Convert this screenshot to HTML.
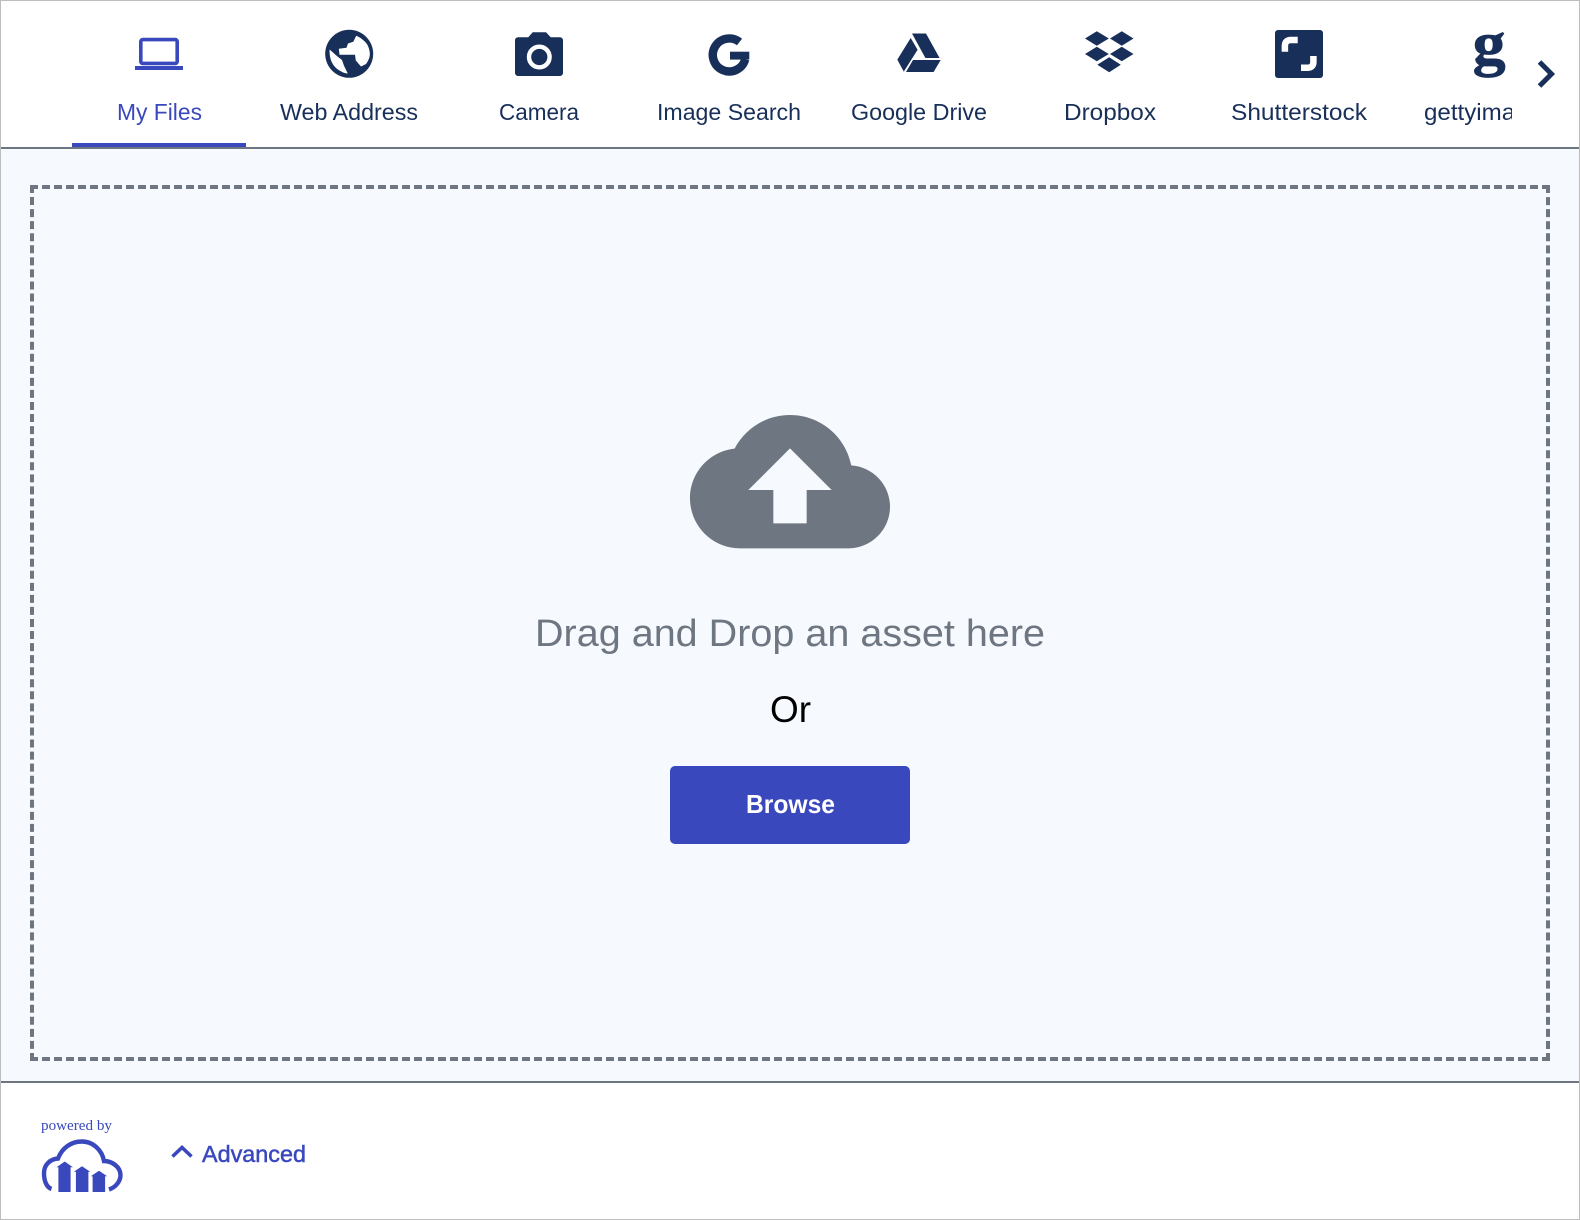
<!DOCTYPE html>
<html lang="en">
<head>
<meta charset="utf-8">
<title>Upload</title>
<style>
html,body{margin:0;padding:0;width:1580px;height:1220px;overflow:hidden;background:#fff}
#frame{position:absolute;left:0;top:0;width:1578px;height:1218px;border:1px solid #bdbdbd}
#main{position:absolute;left:1px;top:149px;width:1578px;height:932px;background:#f6faff}
.line{position:absolute;left:1px;width:1578px;height:2px;background:#6e7682}
#tabline{position:absolute;left:72px;top:143px;width:174px;height:4px;background:#3a48be}
svg{position:absolute;left:0;top:0}
text{font-family:"Liberation Sans",sans-serif}
.tab{font-size:23.5px;fill:#182f59}
</style>
</head>
<body>
<div id="main"></div>
<div class="line" style="top:147px"></div>
<div class="line" style="top:1081px"></div>
<div id="tabline"></div>
<div id="frame"></div>
<svg width="1580" height="1220" viewBox="0 0 1580 1220" xmlns="http://www.w3.org/2000/svg">
  <defs><clipPath id="c"><rect x="1400" y="90" width="112" height="45"/></clipPath></defs>

  <!-- dashed drop zone -->
  <g fill="none" stroke="#6e7682" stroke-width="4">
    <path stroke-dasharray="8 4" d="M30 187H1550"/>
    <path stroke-dasharray="8 4" d="M1550 1059H30"/>
    <path stroke-dasharray="8 4.055" d="M32 185V1061"/>
    <path stroke-dasharray="8 4.055" d="M1548 1061V185"/>
  </g>

  <!-- laptop -->
  <rect x="140.8" y="39.6" width="36.4" height="23.8" rx="2" fill="none" stroke="#3a48be" stroke-width="3.6"/>
  <rect x="135" y="66" width="48" height="4" fill="#3a48be"/>
  <text class="tab" x="117" y="120" textLength="85" lengthAdjust="spacingAndGlyphs" style="fill:#3a48be">My Files</text>

  <!-- globe -->
  <circle cx="349.2" cy="53.8" r="24" fill="#182f59"/>
  <path fill="#fff" d="M356.2 35.8L353.3 41.8 348 43.5 346.5 47.8 338.8 48.8 339.5 54.7 355 54.7 355.8 60.5 361 66.5 366 64C369 60 370 56.5 369.8 53 369.3 47.5 367 43.5 365 41.8 362 38.8 359 36.8 356.2 35.8Z"/>
  <path fill="#fff" d="M329.6 49.5L337.5 56.5 342 60 344 65.7 347.8 73.6C344 73.2 342 72 339.5 70.5 336 68.5 334 66 332.8 64 330 59.5 329.4 54 329.6 49.5Z"/>
  <text class="tab" x="280" y="120" textLength="138" lengthAdjust="spacingAndGlyphs">Web Address</text>

  <!-- camera -->
  <path fill="#182f59" d="M518 37.3H528.3L532.7 32.3H546L550.7 37.3H560A3 3 0 0 1 563 40.3V73A3 3 0 0 1 560 76H518A3 3 0 0 1 515 73V40.3A3 3 0 0 1 518 37.3Z"/>
  <circle cx="539.3" cy="57" r="10.3" fill="none" stroke="#fff" stroke-width="4.4"/>
  <text class="tab" x="499" y="120" textLength="80" lengthAdjust="spacingAndGlyphs">Camera</text>

  <!-- google G -->
  <path fill="none" stroke="#182f59" stroke-width="8.4" d="M739.5 42A16.5 16.5 0 1 0 745.2 59.3"/>
  <rect x="730" y="51.7" width="19.3" height="7.9" fill="#182f59"/>
  <text class="tab" x="657" y="120" textLength="144" lengthAdjust="spacingAndGlyphs">Image Search</text>

  <!-- drive -->
  <path fill="#182f59" d="M912 33.5H926L939.6 58H925.4Z"/>
  <path fill="#182f59" d="M910.7 38L917.6 49.8 903.8 71.6 897.3 59.6Z"/>
  <path fill="#182f59" d="M913 60H940.7L933.6 72H906Z"/>
  <text class="tab" x="851" y="120" textLength="136" lengthAdjust="spacingAndGlyphs">Google Drive</text>

  <!-- dropbox -->
  <path fill="#182f59" d="M1085 38.5L1096.8 31.3 1108.8 38.5 1096.8 45.8Z M1110 38.5L1121.8 31.3 1133.5 38.5 1121.8 45.8Z M1085 54L1096.8 46.8 1108.8 54 1096.8 61.3Z M1110 54L1121.8 46.8 1133.5 54 1121.8 61.3Z M1097.3 64.7L1109.2 57.3 1120.8 64.7 1109.2 72.3Z"/>
  <text class="tab" x="1064" y="120" textLength="92" lengthAdjust="spacingAndGlyphs">Dropbox</text>

  <!-- shutterstock -->
  <rect x="1275" y="30" width="48" height="48" rx="3" fill="#182f59"/>
  <path fill="none" stroke="#fff" stroke-width="6.5" d="M1284.9 51.7V46Q1284.9 40 1291 40H1297.7"/>
  <path fill="none" stroke="#fff" stroke-width="6.5" d="M1313.4 56V62Q1313.4 67.8 1307 67.8H1301"/>
  <text class="tab" x="1231" y="120" textLength="136" lengthAdjust="spacingAndGlyphs">Shutterstock</text>

  <!-- getty -->
  <text x="1472.7" y="64.2" textLength="33" lengthAdjust="spacingAndGlyphs" style="font-family:'Liberation Serif',serif;font-weight:bold;font-size:61.5px;fill:#182f59;stroke:#182f59;stroke-width:.7">g</text>
  <g clip-path="url(#c)"><text class="tab" x="1424" y="120" textLength="130" lengthAdjust="spacingAndGlyphs">gettyimages</text></g>

  <!-- chevron right -->
  <path fill="none" stroke="#182f59" stroke-width="5" d="M1539.5 62L1551.5 74 1539.5 86"/>

  <!-- cloud upload -->
  <path fill="#6e7682" fill-rule="evenodd" transform="translate(690 381.67) scale(8.3333)" d="M19.35 10.04C18.67 6.59 15.64 4 12 4 9.11 4 6.6 5.64 5.35 8.04 2.34 8.36 0 10.91 0 14c0 3.31 2.69 6 6 6h13c2.76 0 5-2.24 5-5 0-2.64-2.05-4.78-4.65-4.96zM14 13v4h-4v-4H7l5-5 5 5h-3z"/>

  <text x="535" y="646" textLength="510" lengthAdjust="spacingAndGlyphs" style="font-size:38px;fill:#6e7682">Drag and Drop an asset here</text>
  <text x="770" y="722" textLength="41" lengthAdjust="spacingAndGlyphs" style="font-size:37px;fill:#000">Or</text>

  <rect x="670" y="766" width="240" height="78" rx="5" fill="#3a48be"/>
  <text x="746" y="813" textLength="89" lengthAdjust="spacingAndGlyphs" style="font-size:26px;font-weight:bold;fill:#fff">Browse</text>

  <!-- footer -->
  <text x="41" y="1130" textLength="71" lengthAdjust="spacingAndGlyphs" style="font-family:'Liberation Serif',serif;font-size:15px;fill:#3a48be">powered by</text>
  <path fill="none" stroke="#3a48be" stroke-width="4.4" d="M51.5 1189C46 1187 44 1180 44 1173C44 1165 50 1159 58 1158.5C62 1148 71 1141.5 82 1141.5C93 1141.5 102 1150 104 1161C112 1161 120.5 1167 120.5 1175C120.5 1182 115 1187.5 109 1189.5"/>
  <path fill="#3a48be" d="M64.7 1161.5L72.9 1167.2H70.6V1192H58.4V1167.2H56.5Z M82 1166.2L90.2 1171.8H88.4V1192H75.9V1171.8H73.8Z M99 1170.7L107.2 1176.2H105.1V1192H92.6V1176.2H90.8Z"/>
  <path fill="none" stroke="#3a48be" stroke-width="3.6" d="M172.5 1156.5L182 1147.5 191.5 1156.5"/>
  <text x="202" y="1162" textLength="104" lengthAdjust="spacingAndGlyphs" style="font-size:23.5px;fill:#3a48be;stroke:#3a48be;stroke-width:.5">Advanced</text>
</svg>
</body>
</html>
